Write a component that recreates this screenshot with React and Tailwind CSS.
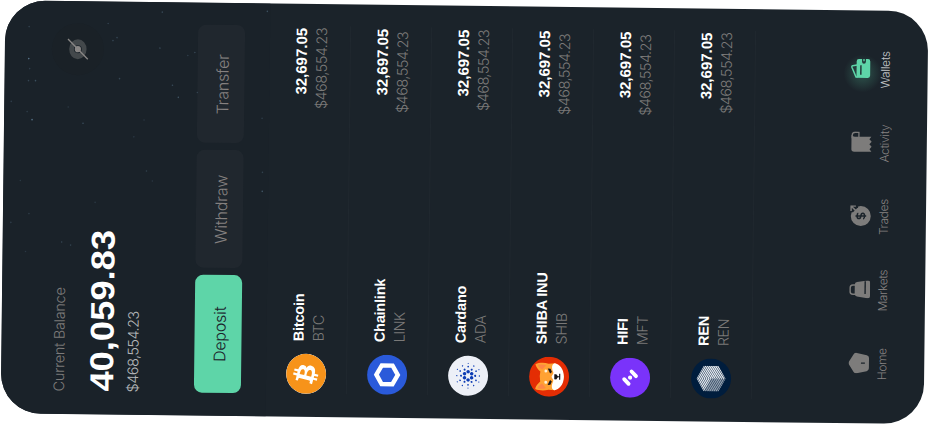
import { SiBitcoin, SiCardano } from "react-icons/si";

const LIGHT = "font-['Inter','Liberation_Sans',sans-serif] font-light";
const BOLD = "font-['Liberation_Sans',Arial,sans-serif] font-bold";

const STARS = [
  [355, 24, 0.9], [387, 24, 0.35], [333, 31, 0.5], [333, 24, 0.4], [294, 28, 0.9], [291, 79, 0.5],
  [374, 108, 0.4], [377, 112, 0.4], [336, 115, 0.4], [302, 23, 0.3], [330, 168, 0.45], [318, 174, 0.55],
  [367, 155, 0.4], [363, 190, 0.4], [360, 183, 0.3], [405, 262, 0.5], [225, 259, 0.6], [403, 157, 0.4],
  [391, 103, 0.35], [244, 143, 0.35], [233, 17, 0.25], [172, 59, 0.4], [169, 68, 0.35], [162, 23, 0.25],
  [312, 7, 0.3], [323, 193, 0.35], [298, 258, 0.3], [278, 130, 0.25], [295, 140, 0.25], [234, 149, 0.25],
  [212, 92, 0.25], [244, 259, 0.35], [191, 8, 0.3], [200, 26, 0.3], [307, 64, 0.25], [345, 25, 0.3],
];

function Stars() {
  return (
    <svg className="pointer-events-none absolute inset-0" width="414" height="264" viewBox="0 0 414 264">
      {STARS.map(([x, y, o], i) => (
        <circle key={i} cx={x} cy={y} r="0.8" fill="#6f93ae" opacity={o * 0.8} />
      ))}
    </svg>
  );
}

function EyeOff() {
  return (
    <svg width="24" height="24" viewBox="-12 -12 24 24">
      <ellipse rx="10" ry="8.7" fill="#43484b" />
      <circle r="4" fill="#1b232a" />
      <circle r="3.1" fill="#8a8786" />
      <path d="M10-10-10 10" stroke="#8a8786" strokeWidth="1.3" />
    </svg>
  );
}

function Bitcoin() {
  return (
    <div className="size-10 overflow-hidden rounded-full bg-white">
      <SiBitcoin size={40} color="#f7931a" />
    </div>
  );
}

function Chainlink() {
  return (
    <svg width="40" height="40" viewBox="-20 -20 40 40">
      <circle r="20" fill="#2a5ada" />
      <path d="M0-10.7 9.3-5.4V5.4L0 10.7-9.3 5.4V-5.4Z" fill="none" stroke="#fff" strokeWidth="4.4" />
    </svg>
  );
}

function Cardano() {
  return (
    <div className="flex size-10 items-center justify-center rounded-full bg-[#edf0f7]">
      <SiCardano size={26} color="#0d3cb4" />
    </div>
  );
}

function Shiba() {
  return (
    <svg width="40" height="40" viewBox="0 0 40 40">
      <circle cx="20" cy="20" r="20" fill="#e42d04" />
      <path d="M7.6 6.2C9.8 6.6 13 8.8 15 11.2Q20 10 25 11.2C27 8.8 30.2 6.6 32.4 6.2 34 10 34.2 15 33 19.5L33.6 26 27 33 20 34.8 13 33 6.4 26 7 19.5C5.8 15 6 10 7.6 6.2Z" fill="#ffa233" />
      <path d="M8.3 8.5C10 9 12 11 13 13L8.7 17C7.6 14 7.6 11 8.3 8.5ZM31.7 8.5C30 9 28 11 27 13L31.3 17C32.4 14 32.4 11 31.7 8.5Z" fill="#ff8746" />
      <path d="M6.4 25.5C7.5 22 12 22.5 15 24 17 25 18 23 20 22.5 22 23 23 25 25 24 28 22.5 32.5 22 33.6 25.5 33 30 28 34.8 20 34.8S7 30 6.4 25.5Z" fill="#fff" />
      <circle cx="14.3" cy="16.8" r="1.5" fill="#fff1d6" />
      <circle cx="25.7" cy="16.8" r="1.5" fill="#fff1d6" />
      <path d="M11.8 18.6 16.8 21 15.2 22.8 12 21.4ZM28.2 18.6 23.2 21 24.8 22.8 28 21.4Z" fill="#17171a" />
      <path d="M17.4 25.2H22.6V27.2L20.5 28.8V30H23V31.2H17V30H19.5V28.8L17.4 27.2Z" fill="#17171a" />
    </svg>
  );
}

function Hifi() {
  return (
    <svg width="40" height="40" viewBox="-20 -20 40 40">
      <circle r="20" fill="#7a33fa" />
      <path d="M-1.6-5.9-6.2-1.4M6.2 1.4 1.6 5.9" stroke="#fff" strokeWidth="3.8" strokeLinecap="round" />
      <circle r="2.1" fill="#fff" />
    </svg>
  );
}

const REN_LINES = Array.from({ length: 22 }, (_, i) => -22 + i * 1.9);

function Ren() {
  return (
    <svg width="40" height="40" viewBox="-20 -20 40 40">
      <defs>
        <clipPath id="ren-hex">
          <path d="M0-14.4 12.8-7.3V7.3L0 14.4-12.8 7.3V-7.3Z" />
        </clipPath>
      </defs>
      <circle r="20" fill="#001d3d" />
      <g clipPath="url(#ren-hex)" fill="none" stroke="#e6ebf0">
        {REN_LINES.map((y) => (
          <path key={y} d={`M-13 ${y + 7.3}L0 ${y}L13 ${y + 7.3}`} strokeWidth="1.25" />
        ))}
        <path d="M-12.8-7.3 0 0V14.4L-12.8 7.3Z" fill="#001d3d" fillOpacity="0.35" stroke="none" />
      </g>
    </svg>
  );
}

const COINS = [
  { name: "Bitcoin", symbol: "BTC", Icon: Bitcoin, inset: "pr-0" },
  { name: "Chainlink", symbol: "LINK", Icon: Chainlink, inset: "pr-[3px]" },
  { name: "Cardano", symbol: "ADA", Icon: Cardano, inset: "pr-0" },
  { name: "SHIBA INU", symbol: "SHIB", Icon: Shiba, inset: "pr-[3px]" },
  { name: "HIFI", symbol: "MFT", Icon: Hifi, inset: "pr-[3px]" },
  { name: "REN", symbol: "REN", Icon: Ren, inset: "pr-0" },
];

function CoinRow({ name, symbol, Icon, inset }) {
  return (
    <li className="flex h-[81px] items-center border-b border-[#20282f]">
      <Icon />
      <div className="flex flex-1 justify-between pt-[3px] pl-[13px] leading-5">
        <div>
          <p className={`${BOLD} text-[14.5px] tracking-[-0.2px] text-white`}>{name}</p>
          <p className={`${LIGHT} text-[14.5px] tracking-[-0.55px] text-[#7a7978]`}>{symbol}</p>
        </div>
        <div className="pr-[1.5px] text-right">
          <p className={`${BOLD} text-[15px] text-white`}>32,697.05</p>
          <p className={`${LIGHT} ${inset} text-[14.5px] tracking-[-0.55px] text-[#7a7978]`}>$468,554.23</p>
        </div>
      </div>
    </li>
  );
}

function HomeIcon() {
  return (
    <svg width="21" height="21" viewBox="0 0 20.5 20.5">
      <path d="M8.5.7Q10 0 11.5.7L18.7 5.3Q20.3 6.5 19.9 8.3L17.8 18Q17.2 20.2 15 20.2H5Q2.8 20.2 2.2 18L.1 8.3Q-.3 6.5 1.3 5.3Z" fill="#7d7c7b" />
      <path d="M10 12.4V16.2" stroke="#1b232a" strokeWidth="1.3" />
    </svg>
  );
}

function MarketsIcon() {
  return (
    <svg width="18" height="21" viewBox="0 0 18 21">
      <path d="M4 7V3.8Q4 1 6.6 1H10.4Q13.2 1 13.2 3.8V7" fill="none" stroke="#7d7c7b" strokeWidth="1.5" />
      <path d="M4.5 5.6H13.5Q15.8 5.6 16.2 7.8L17.9 18.3Q18.2 21 15.6 21H2.4Q-.2 21 .1 18.3L1.8 7.8Q2.2 5.6 4.5 5.6Z" fill="#7d7c7b" />
      <path d="M4.5 16H17.2" stroke="#1b232a" strokeWidth="1.4" />
    </svg>
  );
}

function TradesIcon() {
  return (
    <svg width="21" height="21" viewBox="0 0 21 21">
      <circle cx="10.3" cy="10.8" r="10" fill="#7d7c7b" />
      <path d="M21 0V8H19L14 3V0Z" fill="#1b232a" />
      <path d="M15.3 1H20.2V5.8M20.2 1 15.4 6" fill="none" stroke="#7d7c7b" strokeWidth="1.5" />
      <path d="M13 8.3Q12.6 7.1 10.3 7.1 7.7 7.1 7.7 8.9 7.7 10.5 10.3 10.8 13.1 11.1 13.1 12.9 13.1 14.6 10.3 14.6 7.8 14.6 7.4 13.2M10.3 5.5V16.2" fill="none" stroke="#1b232a" strokeWidth="1.5" />
    </svg>
  );
}

function ActivityIcon() {
  return (
    <svg width="21" height="21" viewBox="0 0 21 21">
      <path d="M14 1.3H17Q20 1.3 20 4.5V8H14.5" fill="none" stroke="#7d7c7b" strokeWidth="1.3" />
      <path d="M3 .6H17.5Q15.6 1.8 15.6 4V20.5L13.2 18.5 10.8 20.9 8.2 18.5 5.6 20.9 3.2 18.7.6 20.7V3.5Q.6.6 3 .6Z" fill="#7d7c7b" />
    </svg>
  );
}

function WalletIcon() {
  return (
    <svg className="-mt-[2px] overflow-visible" width="20" height="20" viewBox="0 0 20 20">
      <defs>
        <radialGradient id="wallet-glow">
          <stop offset="0" stopColor="#5ed5a8" stopOpacity="0.28" />
          <stop offset="1" stopColor="#5ed5a8" stopOpacity="0" />
        </radialGradient>
      </defs>
      <circle cx="5" cy="12" r="19" fill="url(#wallet-glow)" />
      <path d="M1.2 7V5.4L11 1.2Q12.2.8 12.5 2L13.3 6.5" fill="none" stroke="#5ed5a8" strokeWidth="1.5" />
      <path d="M3 5.9H17Q19.3 5.9 19.3 8.2V11.3H16.6Q14.6 11.3 14.6 13.2T16.6 15.1H19.3V17.2Q19.3 19.5 17 19.5H2.9Q.5 19.5.5 17.2V6Z" fill="#5ed5a8" />
      <path d="M3.6 10.2H13" stroke="#1b232a" strokeWidth="1.3" />
      <path d="M17 13.2H19.3" stroke="#5ed5a8" strokeWidth="1.4" />
    </svg>
  );
}

const TABS = [
  { label: "Home", Icon: HomeIcon },
  { label: "Markets", Icon: MarketsIcon },
  { label: "Trades", Icon: TradesIcon },
  { label: "Activity", Icon: ActivityIcon },
  { label: "Wallets", Icon: WalletIcon, active: true },
];

export default function App() {
  return (
    <div className="flex h-[425px] w-[929px] items-center justify-center overflow-hidden bg-white">
      <div className="flex h-[923px] w-[413px] shrink-0 -translate-y-[0.3px] rotate-[-89.33deg] flex-col overflow-hidden rounded-[40px] bg-[#1b232a]">
        <header className="relative h-[265px] bg-[#1a2229] px-[22.5px] pt-12">
          <Stars />
          <div className="flex justify-between">
            <div>
              <p className={`${LIGHT} text-[14.5px] leading-5 tracking-[-0.3px] text-[#7d7b7a]`}>Current Balance</p>
              <p className={`${BOLD} mt-[13px] origin-left scale-x-[1.1] text-[33px] leading-10 text-white`}>40,059.83</p>
              <p className={`${LIGHT} mt-px text-[14.5px] leading-5 tracking-[-0.55px] text-[#b4b7b9]`}>$468,554.23</p>
            </div>
            <div className="-mt-[1px] flex size-[52px] items-center justify-center rounded-full bg-[#1a2127]">
              <EyeOff />
            </div>
          </div>
          <div className={`${LIGHT} mt-[51px] grid grid-cols-3 gap-[7px] text-center text-[16px] leading-[50px] tracking-[-0.2px]`}>
            <button className="h-[47px] rounded-lg bg-[#5ed5a8] text-[#1b232a]">Deposit</button>
            <button className="h-[47px] rounded-lg bg-[#20272e] text-[#858180]">Withdraw</button>
            <button className="h-[47px] rounded-lg bg-[#20272e] text-[#858180]">Transfer</button>
          </div>
        </header>
        <ul className="px-[22.5px]">
          {COINS.map((coin) => (
            <CoinRow key={coin.name} {...coin} />
          ))}
        </ul>
        <nav className="mt-[95.5px] grid grid-cols-5 px-[22.5px]">
          {TABS.map(({ label, Icon, active }) => (
            <div key={label} className="flex flex-col items-center">
              <div className="flex h-[21px] items-center pl-[2px]">
                <Icon />
              </div>
              <span className={`${LIGHT} mt-[5px] text-[12px] leading-4 tracking-[-0.4px] ${active ? "text-[#c4c7c9]" : "text-[#858180]"}`}>{label}</span>
            </div>
          ))}
        </nav>
      </div>
    </div>
  );
}
